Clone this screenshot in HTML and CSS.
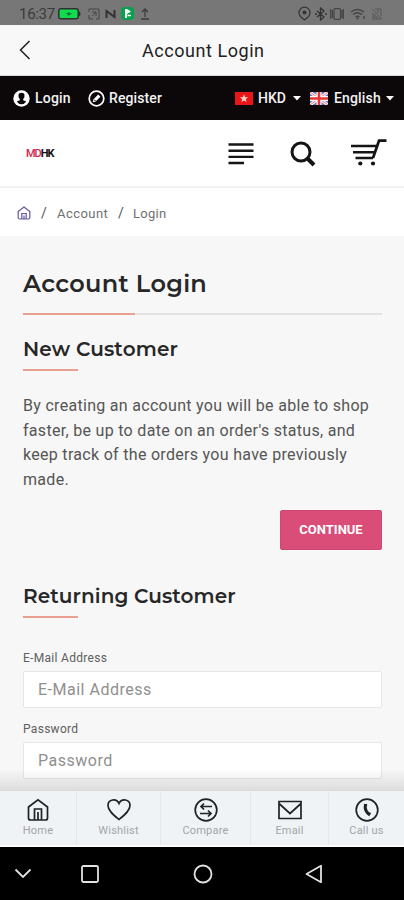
FILE: index.html
```html
<!DOCTYPE html>
<html lang="en">
<head>
<meta charset="utf-8">
<title>Account Login</title>
<link rel="stylesheet" href="styles.css">
</head>
<body>
<div class="status">
  <span class="clock">16:37</span>
  <svg class="battery" width="23" height="12" viewBox="0 0 23 12"><rect x=".8" y=".8" width="19.4" height="10" rx="2" fill="#10dc50" stroke="#303030" stroke-width="1.5"/><path d="M21 3.5q1.5 0 1.5 2.3T21 8.2z" fill="#303030"/><path d="M7 6l5-2-.5 1.5h3L9.500 8l.5-2z" fill="#17662e"/></svg>
  <svg class="nfc-box" width="12" height="12" viewBox="0 0 12 12" fill="none" stroke="#454545"><path d="M1 4V1h10v10H8M1 7v4h4M4 4h4v4M4 8l4-4"/></svg>
  <svg class="n-mark" width="11" height="10" viewBox="0 0 11 10" fill="none" stroke="#333" stroke-width="2"><path d="M1.500 9V2l8 6V1"/></svg>
  <svg class="app-mark" width="13" height="13" viewBox="0 0 13 13"><rect width="13" height="13" rx="4" fill="#08a14c"/><path d="M4 2h2l4 2.500L6 7v4H4z" fill="#fff"/><path d="M6.500 8.500H10" stroke="#fff" stroke-width="1.500"/></svg>
  <svg class="upload" width="10" height="12" viewBox="0 0 10 12" fill="none" stroke="#3c3c3c" stroke-width="1.300"><path d="M5 9V1M2 4l3-3 3 3M1 11h8"/></svg>
  <span class="grow"></span>
  <svg class="pin" width="13" height="15" viewBox="0 0 13 15" fill="none" stroke="#333" stroke-width="1.200"><path d="M6.500 14L2.700 10.700a5.500 5.500 0 1 1 7.600 0z"/><circle cx="6.500" cy="6.500" r="1.400" fill="#333"/></svg>
  <svg class="bt" width="12" height="14" viewBox="0 0 12 14" fill="none" stroke="#333" stroke-width="1.300"><path d="M2 4l7 6-3.500 3V1L9 4l-7 6M0 7h2M10 7h2"/></svg>
  <svg class="vibrate" width="14" height="12" viewBox="0 0 14 12" fill="none" stroke="#444" stroke-width="1.200"><rect x="4" y=".7" width="6.500" height="10.600" rx="1"/><path d="M.7 1v10M13.300 1v10M2.400 2v8M12 2v8" /></svg>
  <svg class="wifi" width="16" height="12" viewBox="0 0 16 12" fill="none" stroke="#444" stroke-width="1.300"><path d="M1 4q6.500-5 13 0M3 6.500q4.500-3.500 9 0M5.500 9q2-1.500 4 0M6.500 10.500h2M14 8v3"/></svg>
  <svg class="signal" width="12" height="12" viewBox="0 0 12 12" fill="none" stroke="#575757"><path d="M1 1l10 10M2 5v6h8M4 1h6v7M4 6v4M6 8v3M7 2v3"/></svg>
</div>
<header class="appbar">
  <svg class="back" width="12" height="20" viewBox="0 0 12 20" fill="none" stroke="#1c1c1c" stroke-width="1.500"><path d="M10.500 1L1.500 10l9 9"/></svg>
  <span class="appbar-title">Account Login</span>
</header>
<nav class="topbar">
  <svg class="user" width="17" height="17" viewBox="0 0 17 17"><circle cx="8.500" cy="8.500" r="8.200" fill="#fff"/><path d="M8.500 2.800a3 3 0 0 1 3 3.200q0 2-1.300 3v1.200l3 1.200q-1.800 2.800-4.700 2.800t-4.700-2.800l3-1.200V9Q5.500 8 5.500 6a3 3 0 0 1 3-3.200z" fill="#0c0709"/></svg>
  <span class="t-login">Login</span>
  <svg class="pen" width="17" height="17" viewBox="0 0 17 17"><circle cx="8.500" cy="8.500" r="7.300" fill="none" stroke="#fff" stroke-width="1.700"/><path d="M4.700 12.300l.8-3 4.700-4.700 2.200 2.200-4.700 4.700z" fill="#fff"/><path d="M6 9.500l1.600 1.600" stroke="#0c0709"/></svg>
  <span class="t-register">Register</span>
  <span class="grow"></span>
  <svg class="flag" width="18" height="13" viewBox="0 0 18 13"><rect width="18" height="13" fill="#e81519"/><path d="M9 2.500l1.200 2.700 2.800.1-2.200 1.900.8 2.800L9 8.500 6.400 10l.8-2.800L5 5.300l2.800-.1z" fill="#ffcfca"/></svg>
  <span class="t-hkd">HKD</span>
  <svg class="caret" width="8" height="5" viewBox="0 0 8 5"><path d="M0 0h8L4 4.500z" fill="#fff"/></svg>
  <svg class="flag uk" width="18" height="13" viewBox="0 0 18 13"><rect width="18" height="13" fill="#6478c2"/><path d="M0 0l18 13M18 0L0 13" stroke="#fff" stroke-width="3"/><path d="M0 0l18 13M18 0L0 13" stroke="#ee6d70"/><path d="M9 0v13M0 6.500h18" stroke="#fff" stroke-width="5"/><path d="M9 0v13M0 6.500h18" stroke="#ea3535" stroke-width="2.600"/></svg>
  <span class="t-english">English</span>
  <svg class="caret" width="8" height="5" viewBox="0 0 8 5"><path d="M0 0h8L4 4.500z" fill="#fff"/></svg>
</nav>
<div class="masthead">
  <span class="logo"><span class="logo-red">MD</span>HK</span>
  <span class="grow"></span>
  <svg class="menu" width="26" height="24" viewBox="0 0 26 24" stroke="#151515" stroke-width="2.400"><path d="M.5 2.500h25M.5 8.700h25M.5 14.900h25M.5 21h15.500"/></svg>
  <svg class="search" width="26" height="26" viewBox="0 0 26 26" fill="none" stroke="#151515"><circle cx="11" cy="11" r="9" stroke-width="3"/><path d="M17.500 17.500l6.500 6.500" stroke-width="4"/></svg>
  <svg class="cart" width="36" height="28" viewBox="0 0 36 28" fill="none" stroke="#151515"><path d="M0 8h26M2 14.300h22M4.500 20h17.500" stroke-width="2.600"/><path d="M35.500 2.700H28L22 20" stroke-width="2.700"/><g fill="#151515" stroke="none"><circle cx="9.300" cy="25.500" r="2.100"/><circle cx="22" cy="25.500" r="2.100"/></g></svg>
</div>
<div class="crumbs">
  <svg width="14" height="14" viewBox="0 0 14 14" fill="none" stroke="#66569c" stroke-width="1.200"><path d="M1.200 5.500L7 1l5.800 4.500v6q0 1.500-1.500 1.500H2.700q-1.500 0-1.500-1.500zM4.800 13V7.500h4.400V13M7 9.500V13"/></svg>
  <span class="slash s1">/</span><span class="c-account">Account</span><span class="slash s2">/</span><span class="c-login">Login</span>
</div>
<main class="content">
  <h1>Account Login</h1>
  <h2 class="h-new">New Customer</h2>
  <p class="intro"><span class="l1">By creating an account you will be able to shop</span><br><span class="l2">faster, be up to date on an order's status, and</span><br><span class="l3">keep track of the orders you have previously</span><br>made.</p>
  <div class="actions"><button>CONTINUE</button></div>
  <h2 class="h-returning">Returning Customer</h2>
  <label class="lb-email" for="email">E-Mail Address</label>
  <input id="email" placeholder="E-Mail Address">
  <label class="lb-pass" for="pass">Password</label>
  <input id="pass" type="password" placeholder="Password">
  <div class="fade"></div>
</main>
<nav class="tabs">
  <div class="tab"><svg width="24" height="24" viewBox="0 0 24 24"><path d="M2.500 9L12 1.800 21.500 9v11q0 2-2 2h-15q-2 0-2-2zM8.500 22V11h7v11M12 14v8"/></svg><span>Home</span></div>
  <div class="tab"><svg width="24" height="24" viewBox="0 0 24 24"><path d="M12 21.500C7 17.500 1 13 1 7.500 1 1 9.500 0 12 5.500 14.500 0 23 1 23 7.500c0 5.500-6 10-11 14z"/></svg><span>Wishlist</span></div>
  <div class="tab"><svg width="24" height="24" viewBox="0 0 24 24"><circle cx="12" cy="12" r="10.800"/><path d="M18 8.500H7M10 5.500l-3 3 3 3M6 15.500h11M14 12.500l3 3-3 3"/></svg><span>Compare</span></div>
  <div class="tab"><svg width="24" height="24" viewBox="0 0 24 24"><path d="M1 3.500h22v17H1zM1 5.500l11 10 11-10"/></svg><span>Email</span></div>
  <div class="tab"><svg width="24" height="24" viewBox="0 0 24 24"><circle cx="12" cy="12" r="10.800"/><path d="M10.500 6q-1.500 7 4.500 11" stroke-width="3"/><path d="M9.500 8l2.500-1.500M13 16.500l2.500-1.500"/></svg><span>Call us</span></div>
</nav>
<footer class="sysnav">
  <svg class="down" width="18" height="11" viewBox="0 0 18 11"><path d="M1.500 1.500L9 9l7.500-7.500"/></svg>
  <svg class="square" width="18" height="18" viewBox="0 0 18 18"><rect x="1" y="1" width="16" height="16" rx="1.500"/></svg>
  <svg class="circle" width="20" height="20" viewBox="0 0 20 20"><circle cx="10" cy="10" r="8.500"/></svg>
  <svg class="tri" width="18" height="20" viewBox="0 0 18 20"><path d="M16 1.800v16.400L1.500 10z" stroke-linejoin="round"/></svg>
</footer>
</body>
</html>
```
FILE: styles.css
```css
* { box-sizing: border-box; }
body { margin: 0; width: 404px; height: 900px; overflow: hidden; background: #f7f7f7; font-family: Roboto, sans-serif; color: #444; display: flex; flex-direction: column; }
svg { flex: none; display: block; }
span { white-space: nowrap; }
.grow { flex: 1; }

.status { height: 25px; flex: none; background: #777; display: flex; align-items: center; padding: 2px 21px 0 19px; }
.clock { width: 37px; font-size: 15px; color: #3b3b3b; letter-spacing: -.3px; }
.battery { margin-left: 2px; }
.nfc-box { margin-left: 7px; }
.n-mark { margin-left: 5px; }
.app-mark { margin-left: 5px; }
.upload { margin-left: 6px; }
.bt { margin-left: 4px; }
.vibrate { margin-left: 3px; }
.wifi { margin-left: 6px; }
.signal { margin-left: 5px; }

.appbar { height: 51px; flex: none; background: #f8f8f8; display: flex; align-items: center; padding-left: 19px; border-bottom: 1px solid #d8d8d8; }
.appbar-title { margin-left: 111px; font-size: 18px; color: #222; letter-spacing: .55px; }

.topbar { height: 44px; flex: none; background: #0c0709; color: #f3f3f3; display: flex; align-items: center; padding: 0 10px 0 13px; font-size: 14px; font-weight: 500; }
.t-login { width: 37px; margin-left: 5px; letter-spacing: .2px; }
.pen { margin-left: 16px; }
.t-register { width: 55px; margin-left: 4px; letter-spacing: .1px; }
.t-hkd { width: 30px; margin-left: 5px; }
.t-hkd + .caret { margin-left: 5px; }
.uk { margin-left: 9px; }
.t-english { width: 49px; margin-left: 6px; letter-spacing: .15px; }
.t-english + .caret { margin-left: 3px; }

.masthead { height: 68px; flex: none; background: #fff; border-bottom: 2px solid #f2f2f2; display: flex; align-items: center; padding: 0 17px 0 26px; }
.logo { font-size: 11px; line-height: 12px; font-weight: 700; color: #111; letter-spacing: -1px; margin-top: 1px; }
.logo-red { color: #d21f51; font-weight: 500; }
.search { margin-left: 36px; }
.menu { margin-top: 1px; }
.search { margin-top: 2px; }
.cart { margin-left: 35px; margin-top: -2px; }

.crumbs { height: 48px; flex: none; background: #fff; display: flex; align-items: center; padding: 2px 0 0 17px; font-size: 13px; color: #707070; }
.slash { font-size: 14px; color: #555; }
.s1 { margin-left: 10px; width: 16px; }
.c-account { width: 61px; letter-spacing: .45px; }
.s2 { width: 15px; }
.c-login { letter-spacing: .3px; }

.content { height: 555px; flex: none; position: relative; padding: 31px 22px 0 23px; }
h1, h2 { margin: 0; font-family: Montserrat, Inter, sans-serif; font-weight: 600; color: #272727; white-space: nowrap; }
h1 { height: 48px; font-size: 24px; line-height: 34px; letter-spacing: .3px; border-bottom: 2px solid; border-image: linear-gradient(90deg, #eaa091 112px, #e3e3e3 112px) 1; }
h2 { height: 36px; font-size: 20px; line-height: 28px; border-bottom: 2px solid; border-image: linear-gradient(90deg, #eaa091 56px, transparent 56px) 1; }
.h-new { margin-top: 20px; letter-spacing: .15px; }
.intro { margin: 23px 0 0; font-size: 16px; line-height: 24.7px; letter-spacing: .3px; color: #555; }
.actions { display: flex; justify-content: flex-end; margin-top: 17px; }
button { width: 102px; height: 40px; border: 1px solid #ce4672; border-radius: 2px; background: #d94d78; color: #fff; padding: 0; font: 700 13px Roboto, sans-serif; }
.h-returning { margin-top: 32px; letter-spacing: .1px; }
label { display: block; height: 18px; font-size: 12px; line-height: 18px; letter-spacing: .3px; color: #606060; }
.lb-email { margin-top: 31px; }
.lb-pass { margin-top: 12px; }
input { display: block; width: 100%; height: 37px; margin-top: 4px; padding: 0 14px; border: 1px solid #e6e6e6; border-radius: 2px; background: #fff; font: 16px Roboto, sans-serif; letter-spacing: .5px; }
input::placeholder { color: #8f8f8f; opacity: 1; }
.fade { position: absolute; left: 0; right: 0; bottom: 0; height: 22px; background: linear-gradient(transparent, rgba(0, 0, 0, .11)); }

.tabs { height: 56px; flex: none; background: #eff3f6; border-bottom: 2px solid #fff; display: grid; grid-template-columns: 77px 84px 90px 78px 75px; }
.tab { border-right: 1px solid #e5e8eb; display: flex; flex-direction: column; align-items: center; padding-top: 7px; font-size: 11px; line-height: 14px; letter-spacing: .2px; color: #a2a5a8; }
.tab:last-child { border-right: 0; }
.tab svg { fill: none; stroke: #202224; stroke-width: 1.700; margin-bottom: 2px; }

.sysnav { height: 53px; flex: none; background: #000; display: flex; align-items: center; padding-left: 14px; }
.sysnav svg { fill: none; stroke: #e2e2e2; stroke-width: 1.800; }
.square { margin-left: 49px; }
.circle { margin-left: 94px; }
.tri { margin-left: 92px; }
```
